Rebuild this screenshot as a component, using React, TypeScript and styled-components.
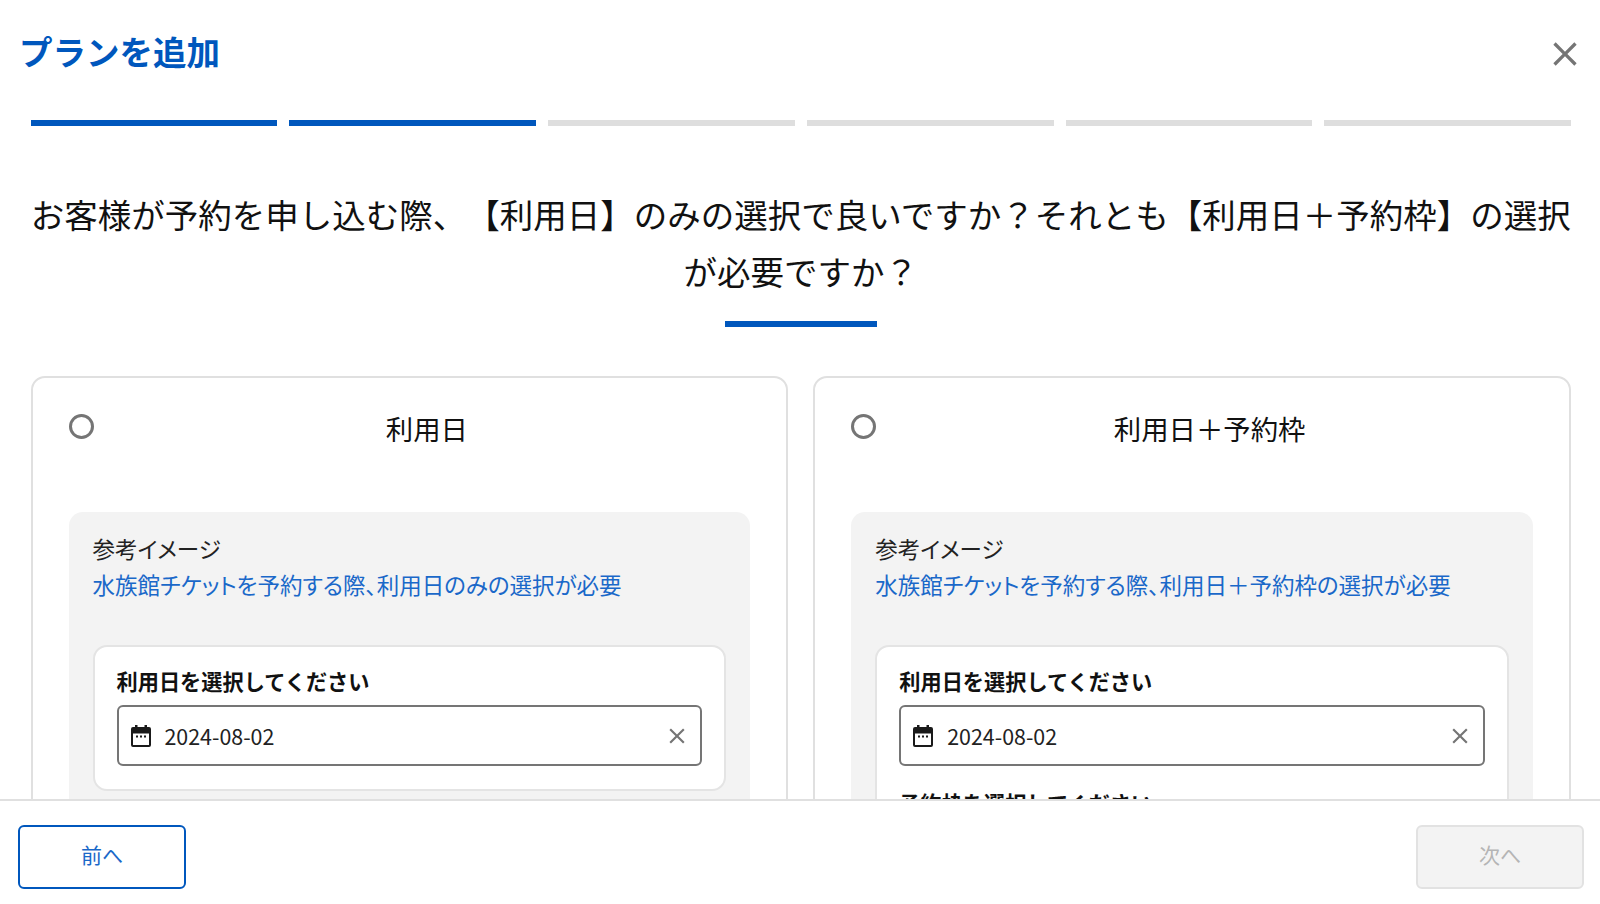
import React from 'react';
import styled, { createGlobalStyle } from 'styled-components';

const GlobalStyle = createGlobalStyle`
  html, body {
    margin: 0;
    padding: 0;
    background: #fff;
    font-family: "Noto Sans CJK JP", "Noto Sans", sans-serif;
    color: #1a1a1a;
  }
  * {
    box-sizing: border-box;
  }
`;

const Page = styled.div`
  height: 904px;
  display: flex;
  flex-direction: column;
  overflow: hidden;
  background: #fff;
`;

const Header = styled.header`
  height: 106px;
  flex-shrink: 0;
  display: flex;
  align-items: center;
  justify-content: space-between;
  padding: 0 15px 0 19px;
`;

const Title = styled.h1`
  margin: -4px 0 0;
  font-size: 33.5px;
  line-height: 1;
  font-weight: 700;
  color: #0057bd;
`;

const CloseButton = styled.button`
  width: 40px;
  height: 40px;
  margin-top: 2px;
  padding: 0;
  border: none;
  background: none;
  color: #757575;
  display: flex;
`;

const Scroller = styled.main`
  flex: 1;
  min-height: 0;
  overflow: hidden;
  padding: 14px 29px 0 30.5px;
`;

const Steps = styled.div`
  display: grid;
  grid-template-columns: repeat(6, 1fr);
  gap: 12px;
`;

const Step = styled.div<{ $done?: boolean }>`
  height: 6px;
  background: ${(p) => (p.$done ? '#0057bd' : '#dedede')};
`;

const Question = styled.h2`
  margin: 59px 0 0;
  font-size: 33.5px;
  line-height: 57px;
  font-weight: 400;
  text-align: center;
  white-space: nowrap;
  text-spacing-trim: space-all;
  color: #111;
`;

const Underline = styled.div`
  width: 152px;
  height: 6px;
  margin: 22px auto 0;
  background: #0057bd;
`;

const Cards = styled.div`
  margin-top: 49px;
  display: grid;
  grid-template-columns: 1fr 1fr;
  gap: 25px;
`;

const Card = styled.section`
  border: 2px solid #e0e0e0;
  border-radius: 14px;
  padding: 36px 36px 40px;
`;

const CardHead = styled.div`
  display: flex;
  align-items: flex-start;
  height: 98px;
`;

const Radio = styled.span`
  flex-shrink: 0;
  width: 25px;
  height: 25px;
  border: 3px solid #757575;
  border-radius: 50%;
`;

const CardName = styled.div`
  flex: 1;
  padding-left: 10px;
  font-size: 27.4px;
  line-height: 28px;
  text-align: center;
  color: #111;
`;

const Sample = styled.div`
  background: #f3f3f3;
  border-radius: 14px;
  padding: 18px 24px 40px;
`;

const SampleLabel = styled.div`
  font-size: 22.5px;
  line-height: 36px;
  font-feature-settings: 'palt';
  color: #222;
`;

const SampleText = styled.div`
  font-size: 22.5px;
  line-height: 36px;
  font-feature-settings: 'palt';
  color: #1a68c9;
`;

const Panel = styled.div`
  margin-top: 43px;
  background: #fff;
  border: 2px solid #e4e4e4;
  border-radius: 14px;
  padding: 19px 22px 23px;
`;

const FieldLabel = styled.div`
  font-size: 21.2px;
  line-height: 30px;
  font-weight: 700;
  color: #111;
`;

const Field = styled.div`
  margin-top: 9px;
  height: 61px;
  border: 2px solid #757575;
  border-radius: 6px;
  display: flex;
  align-items: center;
  padding: 0 10px 0 12px;
`;

const DateValue = styled.span`
  flex: 1;
  margin-left: 14px;
  font-size: 21.4px;
  color: #222;
`;

const ClearIcon = styled.svg`
  width: 26px;
  height: 26px;
  color: #757575;
  fill: currentColor;
`;

const CalendarIcon = styled.svg`
  width: 20px;
  height: 22px;
  flex-shrink: 0;
  color: #1a1a1a;
`;

const SecondLabel = styled(FieldLabel)`
  margin-top: 22px;
`;

const Footer = styled.footer`
  height: 105px;
  flex-shrink: 0;
  border-top: 2px solid #e0e0e0;
  background: #fff;
  display: flex;
  align-items: flex-start;
  justify-content: space-between;
  padding: 24px 16px 0 18px;
`;

const NavButton = styled.button<{ $disabled?: boolean }>`
  width: 168px;
  height: 64px;
  padding: 0 0 6px;
  border-radius: 6px;
  font-family: inherit;
  font-size: 21px;
  border: 2px solid ${(p) => (p.$disabled ? '#e2e2e2' : '#0057bd')};
  background: ${(p) => (p.$disabled ? '#f3f3f3' : '#fff')};
  color: ${(p) => (p.$disabled ? '#b5b5b5' : '#1a68c9')};
`;

const closePath =
  'M19 6.41 17.59 5 12 10.59 6.41 5 5 6.41 10.59 12 5 17.59 6.41 19 12 13.41 17.59 19 19 17.59 13.41 12z';

const Calendar = () => (
  <CalendarIcon viewBox="0 0 20 22">
    <path
      fill="currentColor"
      d="M4 0h2.5v2h7V0H16v2h2a2 2 0 0 1 2 2v16a2 2 0 0 1-2 2H2a2 2 0 0 1-2-2V4a2 2 0 0 1 2-2h2zM2 8.5V20h16V8.5z"
    />
    <rect x="5" y="10.5" width="2" height="2" fill="currentColor" />
    <rect x="9" y="10.5" width="2" height="2" fill="currentColor" />
    <rect x="13" y="10.5" width="2" height="2" fill="currentColor" />
  </CalendarIcon>
);

const DateField = () => (
  <Field>
    <Calendar />
    <DateValue>2024-08-02</DateValue>
    <ClearIcon viewBox="0 0 24 24">
      <path d={closePath} />
    </ClearIcon>
  </Field>
);

interface OptionProps {
  name: string;
  description: string;
  withSlot?: boolean;
}

const Option: React.FC<OptionProps> = ({ name, description, withSlot }) => (
  <Card>
    <CardHead>
      <Radio />
      <CardName>{name}</CardName>
    </CardHead>
    <Sample>
      <SampleLabel>参考イメージ</SampleLabel>
      <SampleText>{description}</SampleText>
      <Panel>
        <FieldLabel>利用日を選択してください</FieldLabel>
        <DateField />
        {withSlot && <SecondLabel>予約枠を選択してください</SecondLabel>}
      </Panel>
    </Sample>
  </Card>
);

const steps = [true, true, false, false, false, false];

const App: React.FC = () => (
  <Page>
    <GlobalStyle />
    <Header>
      <Title>プランを追加</Title>
      <CloseButton aria-label="閉じる">
        <svg viewBox="0 0 24 24" width="40" height="40" fill="currentColor">
          <path d={closePath} />
        </svg>
      </CloseButton>
    </Header>
    <Scroller>
      <Steps>
        {steps.map((done, i) => (
          <Step key={i} $done={done} />
        ))}
      </Steps>
      <Question>
        お客様が予約を申し込む際、【利用日】のみの選択で良いですか？それとも【利用日＋予約枠】の選択
        <br />
        が必要ですか？
      </Question>
      <Underline />
      <Cards>
        <Option name="利用日" description="水族館チケットを予約する際、利用日のみの選択が必要" />
        <Option
          name="利用日＋予約枠"
          description="水族館チケットを予約する際、利用日＋予約枠の選択が必要"
          withSlot
        />
      </Cards>
    </Scroller>
    <Footer>
      <NavButton>前へ</NavButton>
      <NavButton $disabled>次へ</NavButton>
    </Footer>
  </Page>
);

export default App;
